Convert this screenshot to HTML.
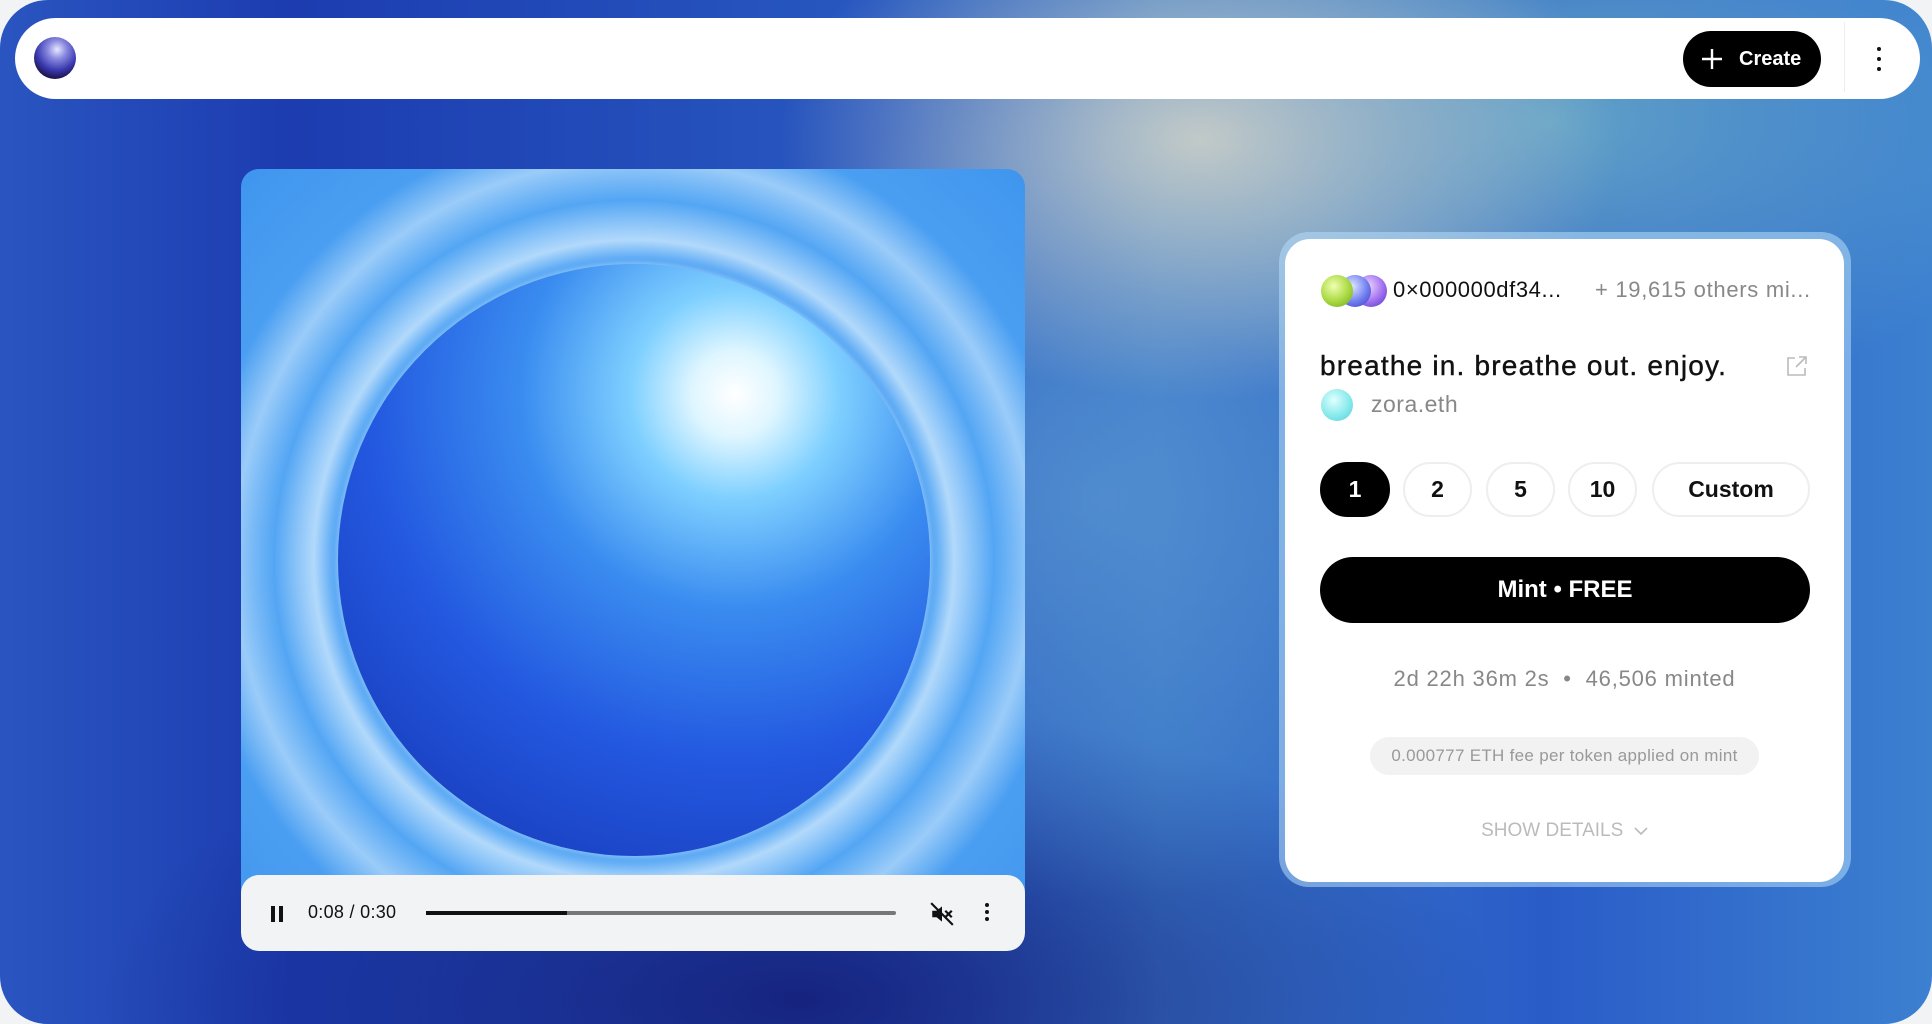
<!DOCTYPE html>
<html><head><meta charset="utf-8"><style>
*{margin:0;padding:0;box-sizing:border-box}
html,body{width:1932px;height:1024px;overflow:hidden;background:#f2f3f5;font-family:"Liberation Sans",sans-serif}
.page{position:absolute;left:0;top:0;width:1932px;height:1024px;border-radius:48px;overflow:hidden;
background:
radial-gradient(ellipse 420px 260px at 1200px 140px,rgba(200,205,200,.95),rgba(160,190,200,0) 100%),
radial-gradient(ellipse 500px 300px at 1550px 120px,rgba(110,180,200,.8),rgba(110,180,200,0) 100%),
radial-gradient(ellipse 500px 400px at 1100px 500px,rgba(90,150,210,.7),rgba(90,150,210,0) 100%),
radial-gradient(ellipse 700px 300px at 800px 1000px,rgba(20,30,120,.9),rgba(20,30,120,0) 100%),
linear-gradient(90deg,#2a55c0 0%,#1c3cb0 15%,#2858c0 45%,#3a78c8 60%,#2a5cc8 80%,#3c80d0 100%);}
.bar{position:absolute;left:15px;top:18px;width:1905px;height:81px;background:#fff;border-radius:41px}
.logo{position:absolute;left:34px;top:37px;width:42px;height:42px;border-radius:50%;
background:radial-gradient(circle at 55% 30%,#e8e8ff 0%,#8a8ae0 25%,#3a3ab0 55%,#1a1040 80%,#3a2010 100%)}
.create{position:absolute;left:1683px;top:31px;width:138px;height:56px;background:#000;border-radius:28px;color:#fff;font-weight:bold;font-size:20px;line-height:56px;padding-left:56px}
.create svg{position:absolute;left:18px;top:17px}
.div{position:absolute;left:1844px;top:22px;width:1px;height:70px;background:#eee}
.dots{position:absolute;left:1877px;top:47px}
.dots i{display:block;width:4px;height:4px;border-radius:50%;background:#111;margin-bottom:6px}
.video{position:absolute;left:241px;top:169px;width:784px;height:782px;border-radius:18px;overflow:hidden;
background:
radial-gradient(circle at 393px 391px,rgba(0,0,0,0) 0 300px,rgba(240,250,255,.6) 320px,rgba(80,160,240,0) 360px,rgba(230,245,255,.5) 400px,rgba(60,150,240,0) 440px),
radial-gradient(circle at 393px 391px,#3f8ff0 0,#56a8f5 60%,#3f95ee 100%)}
.sphere{position:absolute;left:97px;top:95px;width:592px;height:592px;border-radius:50%;
background:radial-gradient(circle at 67% 22%,#ffffff 0,#dff6ff 7%,#7fd0ff 17%,#3a8cf0 35%,#2358e0 60%,#1a40c0 85%,#3058c8 100%);
box-shadow:0 0 8px rgba(255,255,255,.5)}
.ctrl{position:absolute;left:0;top:706px;width:784px;height:76px;background:#f1f3f4;border-radius:18px}
.pause{position:absolute;left:30px;top:31px}
.pause i{display:inline-block;width:4px;height:16px;background:#111;margin-right:4px}
.time{position:absolute;left:67px;top:27px;font-size:18px;color:#111;letter-spacing:.3px}
.prog{position:absolute;left:185px;top:36px;width:470px;height:4px;background:#777;border-radius:2px}
.prog i{display:block;width:141px;height:4px;background:#111}
.mute{position:absolute;left:688px;top:26px}
.vd{position:absolute;left:744px;top:28px}
.vd i{display:block;width:4px;height:4px;border-radius:50%;background:#111;margin-bottom:3px}
.glow{position:absolute;left:1279px;top:232px;width:572px;height:655px;border-radius:30px;background:rgba(180,220,250,.55)}
.card{position:absolute;left:1285px;top:239px;width:559px;height:643px;border-radius:25px;background:#fff}
.av{position:absolute;top:36px;width:32px;height:32px;border-radius:50%}
.addr{position:absolute;left:108px;top:38px;font-size:22px;color:#111;letter-spacing:.6px}
.oth{position:absolute;left:310px;top:38px;font-size:22px;color:#888;letter-spacing:.7px}
.title{position:absolute;left:35px;top:111px;font-size:28px;color:#111;letter-spacing:1.2px;-webkit-text-stroke:.4px #111}
.ext{position:absolute;left:500px;top:115px}
.zav{position:absolute;left:36px;top:150px;width:32px;height:32px;border-radius:50%;background:radial-gradient(circle at 40% 35%,#e0ffff,#80e8ea 60%,#60c8d8)}
.zora{position:absolute;left:86px;top:152px;font-size:23px;color:#888;letter-spacing:.5px}
.q{position:absolute;top:223px;height:55px;border:2px solid #eee;border-radius:28px;text-align:center;line-height:51px;font-size:23px;font-weight:bold;color:#111}
.q.on{background:#000;color:#fff;border-color:#000}
.mint{position:absolute;left:35px;top:318px;width:490px;height:66px;border-radius:33px;background:#000;color:#fff;font-weight:bold;font-size:24px;text-align:center;line-height:66px}
.stats{position:absolute;left:0;width:559px;top:427px;text-align:center;font-size:22px;color:#888;letter-spacing:.8px}
.fee{position:absolute;left:85px;top:498px;width:389px;height:38px;border-radius:19px;background:#f2f2f2;color:#999;font-size:17px;text-align:center;line-height:38px;letter-spacing:.3px}
.sd{position:absolute;left:0;width:559px;top:581px;text-align:center;font-size:19px;color:#bbb}
</style></head><body>
<div class="page">
<div class="bar"></div>
<div class="logo"></div>
<div class="create"><svg width="22" height="22" viewBox="0 0 22 22"><path d="M11 1v20M1 11h20" stroke="#fff" stroke-width="2.4"/></svg>Create</div>
<div class="div"></div>
<div class="dots"><i></i><i></i><i></i></div>

<div class="video">
<div class="sphere"></div>
<div class="ctrl">
<div class="pause"><i></i><i></i></div>
<div class="time">0:08 / 0:30</div>
<div class="prog"><i></i></div>
<svg class="mute" width="26" height="26" viewBox="0 0 24 24"><path d="M3 9h4l5-4v14l-5-4H3z" fill="#111"/><path d="M15 9l6 6M21 9l-6 6M2 2l20 20" stroke="#111" stroke-width="2"/></svg>
<div class="vd"><i></i><i></i><i></i></div>
</div>
</div>

<div class="glow"></div>
<div class="card">
<div class="av" style="left:70px;background:radial-gradient(circle at 40% 35%,#f0d8ff,#a070f0 55%,#5030c0)"></div>
<div class="av" style="left:54px;background:radial-gradient(circle at 40% 35%,#e0e8ff,#7080f0 55%,#4030c0)"></div>
<div class="av" style="left:36px;background:radial-gradient(circle at 40% 35%,#f0ffb0,#a8d840 55%,#70a020)"></div>
<div class="addr">0×000000df34...</div>
<div class="oth">+ 19,615 others mi...</div>
<div class="title">breathe in. breathe out. enjoy.</div>
<svg class="ext" width="24" height="24" viewBox="0 0 24 24" fill="none" stroke="#bbb" stroke-width="1.6"><path d="M10 4H3v17h17v-7M14 3h7v7M21 3L11 13"/></svg>
<div class="zav"></div>
<div class="zora">zora.eth</div>
<div class="q on" style="left:35px;width:70px">1</div>
<div class="q" style="left:118px;width:69px">2</div>
<div class="q" style="left:201px;width:69px">5</div>
<div class="q" style="left:283px;width:69px">10</div>
<div class="q" style="left:367px;width:158px">Custom</div>
<div class="mint">Mint • FREE</div>
<div class="stats">2d 22h 36m 2s &nbsp;•&nbsp; 46,506 minted</div>
<div class="fee">0.000777 ETH fee per token applied on mint</div>
<div class="sd">SHOW DETAILS &nbsp;<svg width="14" height="10" viewBox="0 0 14 10"><path d="M1 2l6 6 6-6" stroke="#bbb" stroke-width="1.6" fill="none"/></svg></div>
</div>
</div>
</body></html>
